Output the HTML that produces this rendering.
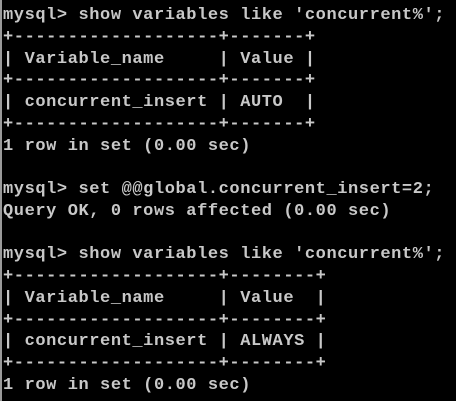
<!DOCTYPE html>
<html><head><meta charset="utf-8"><style>
html,body{margin:0;padding:0;background:#000;width:456px;height:401px;overflow:hidden}
.b{position:absolute;left:0;top:0;width:2px;height:401px;background:#9a9a9a}
pre{position:absolute;left:3px;top:5px;margin:0;font-family:"Liberation Mono",monospace;font-weight:bold;font-size:17px;letter-spacing:0.58px;line-height:21.75px;color:#c8c8c8}
</style></head><body><div class="b"></div><pre>mysql&gt; show variables like 'concurrent%';
+-------------------+-------+
| Variable_name     | Value |
+-------------------+-------+
| concurrent_insert | AUTO  |
+-------------------+-------+
1 row in set (0.00 sec)

mysql&gt; set @@global.concurrent_insert=2;
Query OK, 0 rows affected (0.00 sec)

mysql&gt; show variables like 'concurrent%';
+-------------------+--------+
| Variable_name     | Value  |
+-------------------+--------+
| concurrent_insert | ALWAYS |
+-------------------+--------+
1 row in set (0.00 sec)</pre></body></html>
